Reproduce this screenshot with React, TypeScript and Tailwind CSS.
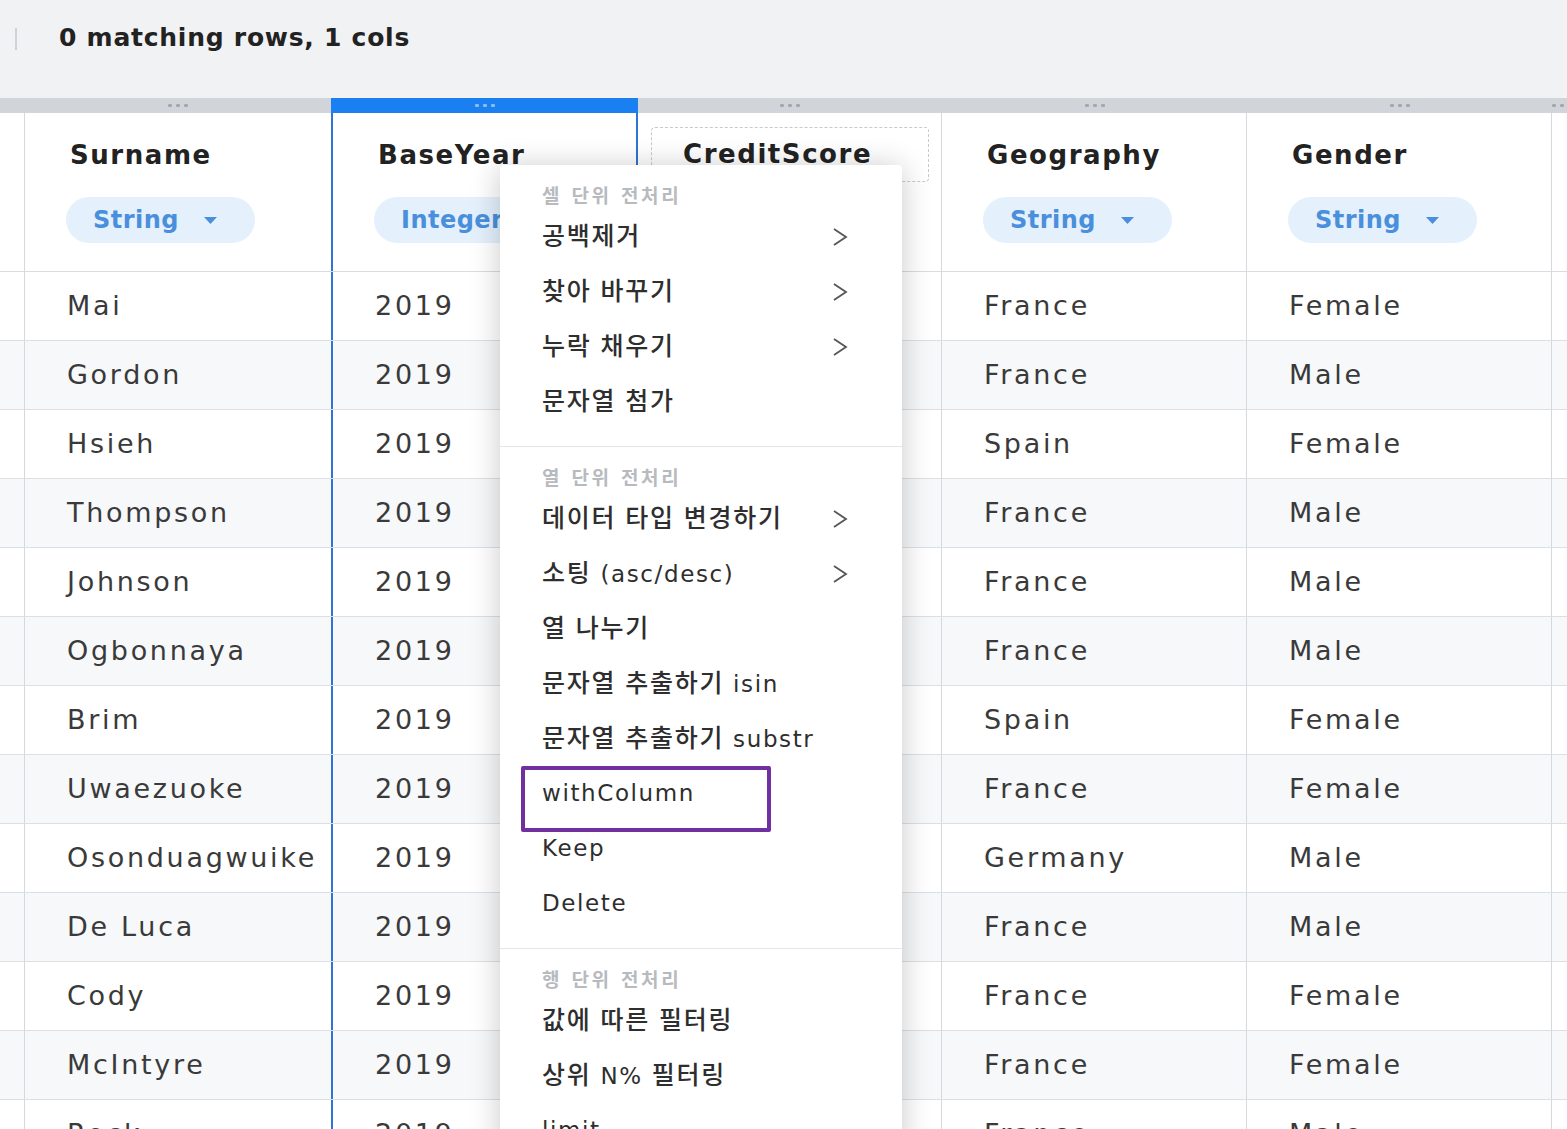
import React from 'react'

const FONT = { fontFamily: '"DejaVu Sans", "Noto Sans CJK KR", sans-serif' }

const CELL = [
  'w-[25px] shrink-0 border-r border-[#d5d8dc]',
  'w-[306px] shrink-0',
  'w-[307px] shrink-0 border-x-2 border-[#2f73d4]',
  'w-[304px] shrink-0 border-r border-[#d5d8dc]',
  'w-[305px] shrink-0 border-r border-[#d5d8dc]',
  'w-[305px] shrink-0 border-r border-[#d5d8dc]',
  'flex-1',
]

const STRIP = ['w-[25px]', 'w-[306px]', 'w-[307px]', 'w-[304px]', 'w-[305px]', 'w-[305px]', 'flex-1']

const ROWS = [
  ['Mai', '2019', '619', 'France', 'Female'],
  ['Gordon', '2019', '608', 'France', 'Male'],
  ['Hsieh', '2019', '502', 'Spain', 'Female'],
  ['Thompson', '2019', '699', 'France', 'Male'],
  ['Johnson', '2019', '850', 'France', 'Male'],
  ['Ogbonnaya', '2019', '645', 'France', 'Male'],
  ['Brim', '2019', '822', 'Spain', 'Female'],
  ['Uwaezuoke', '2019', '376', 'France', 'Female'],
  ['Osonduagwuike', '2019', '501', 'Germany', 'Male'],
  ['De Luca', '2019', '684', 'France', 'Male'],
  ['Cody', '2019', '528', 'France', 'Female'],
  ['McIntyre', '2019', '497', 'France', 'Female'],
  ['Rock', '2019', '476', 'France', 'Male'],
]

type MenuItem = { label: string; sub?: boolean; mark?: boolean }

const MENU: { title: string; items: MenuItem[] }[] = [
  {
    title: '셀 단위 전처리',
    items: [
      { label: '공백제거', sub: true },
      { label: '찾아 바꾸기', sub: true },
      { label: '누락 채우기', sub: true },
      { label: '문자열 첨가' },
    ],
  },
  {
    title: '열 단위 전처리',
    items: [
      { label: '데이터 타입 변경하기', sub: true },
      { label: '소팅 (asc/desc)', sub: true },
      { label: '열 나누기' },
      { label: '문자열 추출하기 isin' },
      { label: '문자열 추출하기 substr' },
      { label: 'withColumn', mark: true },
      { label: 'Keep' },
      { label: 'Delete' },
    ],
  },
  {
    title: '행 단위 전처리',
    items: [{ label: '값에 따른 필터링' }, { label: '상위 N% 필터링' }, { label: 'limit' }, { label: 'Sample' }],
  },
]

// hangul runs are set a bit larger than latin runs, the menu text is stretched in the source
function MenuLabel({ text }: { text: string }) {
  const parts = text.split(/([\uac00-\ud7a3]+)/).filter(Boolean)
  return (
    <span className="whitespace-nowrap">
      {parts.map((p, i) =>
        /[\uac00-\ud7a3]/.test(p) ? (
          <span key={i} className="text-[25px] tracking-[0.07em]">{p}</span>
        ) : (
          <span key={i} className="tracking-[0.07em]">{p}</span>
        ),
      )}
    </span>
  )
}

function Dots({ blue }: { blue?: boolean }) {
  const dot = blue ? 'bg-[#8bbcf5]' : 'bg-[#a3a9b0]'
  return (
    <div className="flex gap-[4px]">
      <span className={`h-[3px] w-[4px] rounded-[1px] ${dot}`} />
      <span className={`h-[3px] w-[4px] rounded-[1px] ${dot}`} />
      <span className={`h-[3px] w-[4px] rounded-[1px] ${dot}`} />
    </div>
  )
}

function TypePill({ label }: { label: string }) {
  return (
    <div className="inline-flex h-[46px] items-center rounded-full bg-[#e4f1fc] pl-[27px] pr-[38px]">
      <span className="text-[24px] font-bold tracking-[0.02em] text-[#4a8fdc]">{label}</span>
      <svg width="13" height="7" viewBox="0 0 13 7" className="ml-[25px]">
        <path d="M0 0h13L6.5 7z" fill="#4a8fdc" />
      </svg>
    </div>
  )
}

function HeaderCell({ title, type }: { title: string; type: string }) {
  return (
    <div className="flex flex-col items-start pl-[41px] pt-[27px]">
      <div className="ml-[4px] h-[30px] text-[26px] font-bold leading-[30px] tracking-[0.06em] text-[#222]">{title}</div>
      <div className="mt-[27px]">
        <TypePill label={type} />
      </div>
    </div>
  )
}

function Chevron() {
  return (
    <svg width="16" height="22" viewBox="0 0 16 22" className="shrink-0">
      <polyline points="2,3 14,11 2,19" fill="none" stroke="#555" strokeWidth="1.8" />
    </svg>
  )
}

function ContextMenu() {
  return (
    <div className="absolute left-[500px] top-[165px] w-[402px] rounded-[4px] bg-white shadow-[0_2px_30px_rgba(0,0,0,0.22)]">
      {MENU.map((section, si) => (
        <div key={section.title} className={si > 0 ? 'border-t-[1.5px] border-[#e3e5e8]' : ''}>
          <div className="h-[44px] pl-[42px] pt-[20px] text-[19px] font-bold leading-[22px] tracking-[0.14em] text-[#b7babe]">
            {section.title}
          </div>
          <div className={si < MENU.length - 1 ? 'pb-[17px]' : ''}>
            {section.items.map(item => (
              <div
                key={item.label}
                className="relative flex h-[55px] items-center justify-between pl-[42px] pr-[54px] text-[23px] font-medium text-[#2e2e2e]"
              >
                <MenuLabel text={item.label} />
                {item.sub && <Chevron />}
                {item.mark && (
                  <div className="absolute left-[21px] top-0 h-[66px] w-[250px] rounded-[2px] border-4 border-[#7030a0]" />
                )}
              </div>
            ))}
          </div>
        </div>
      ))}
    </div>
  )
}

export default function App() {
  return (
    <div className="relative h-[1129px] w-[1567px] overflow-hidden bg-white" style={FONT}>
      <div className="flex h-[98px] items-start bg-[#f1f2f4] pt-[24px]">
        <div className="ml-[15px] mt-[4px] h-[22px] w-[2px] bg-[#cfd2d6]" />
        <div className="ml-[42px] text-[25px] font-bold leading-[28px] tracking-[0.03em] text-[#222]">
          0 matching rows, 1 cols
        </div>
      </div>

      <div className="flex h-[15px] bg-[#d1d5da]">
        {STRIP.map((w, i) => (
          <div key={i} className={`${w} flex shrink-0 items-center justify-center ${i === 2 ? 'bg-[#1a7ff0]' : ''}`}>
            {i > 0 && <Dots blue={i === 2} />}
          </div>
        ))}
      </div>

      <div className="flex h-[159px] border-b border-[#d8dbdf]">
        <div className={CELL[0]} />
        <div className={CELL[1]}>
          <HeaderCell title="Surname" type="String" />
        </div>
        <div className={CELL[2]}>
          <HeaderCell title="BaseYear" type="Integer" />
        </div>
        <div className={CELL[3]}>
          <div className="ml-[13px] mt-[14px] flex h-[55px] w-[278px] items-center rounded-[4px] border border-dashed border-[#c6cace] pl-[31px]">
            <span className="text-[26px] font-bold tracking-[0.06em] text-[#222]">CreditScore</span>
          </div>
          <div className="ml-[41px] mt-[15px]">
            <TypePill label="Integer" />
          </div>
        </div>
        <div className={CELL[4]}>
          <HeaderCell title="Geography" type="String" />
        </div>
        <div className={CELL[5]}>
          <HeaderCell title="Gender" type="String" />
        </div>
        <div className={CELL[6]} />
      </div>

      {ROWS.map((row, r) => (
        <div key={r} className={`flex h-[69px] border-b border-[#dcdfe3] ${r % 2 ? 'bg-[#f7f8fa]' : 'bg-white'}`}>
          <div className={CELL[0]} />
          {row.map((v, c) => (
            <div
              key={c}
              className={`${CELL[c + 1]} flex items-center whitespace-nowrap pl-[42px] text-[27px] tracking-[0.1em] text-[#3a3a3a]`}
            >
              {v}
            </div>
          ))}
          <div className={CELL[6]} />
        </div>
      ))}

      <ContextMenu />
    </div>
  )
}
